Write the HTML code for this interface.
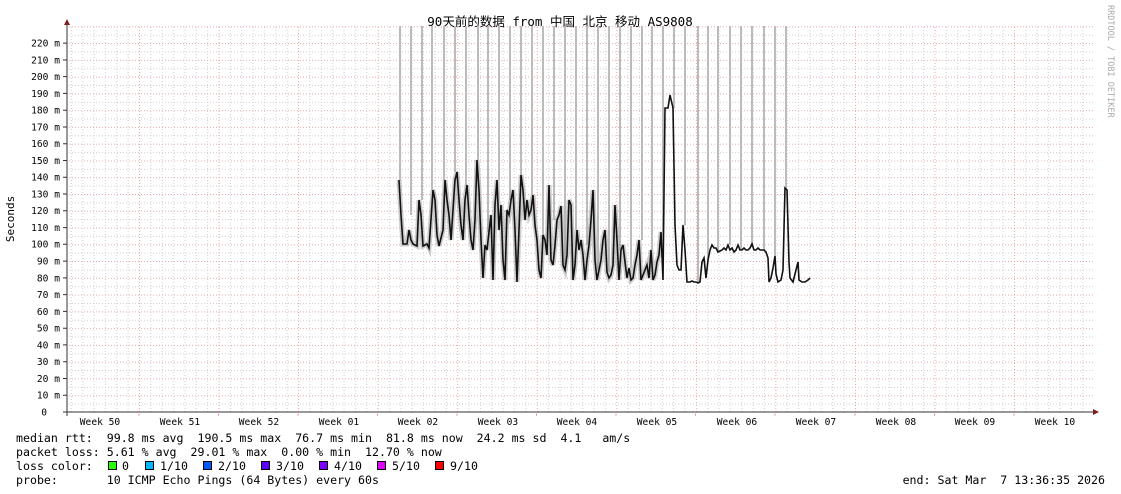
<!DOCTYPE html>
<html><head><meta charset="utf-8"><style>
html,body{margin:0;padding:0;background:#fff;width:1121px;height:494px;overflow:hidden}
svg{display:block}
.m{font-family:"DejaVu Sans Mono","Liberation Mono",monospace}
.p{white-space:pre}
</style></head><body>
<svg width="1121" height="494" viewBox="0 0 1121 494" xmlns="http://www.w3.org/2000/svg">
<defs>
<pattern id="hg" patternUnits="userSpaceOnUse" x="0" y="-7.25" width="3" height="16.77">
<rect x="0" y="0" width="1" height="1" fill="#e8a8a8"/>
<rect x="0" y="8.385" width="1" height="1" fill="#cfcfcf"/>
</pattern>
<pattern id="vg" patternUnits="userSpaceOnUse" x="139" y="0" width="79.55" height="3">
<rect x="0" y="0" width="1" height="1" fill="#e8a8a8"/>
<rect x="11.364" y="0" width="1" height="1" fill="#cfcfcf"/>
<rect x="22.728" y="0" width="1" height="1" fill="#cfcfcf"/>
<rect x="34.092" y="0" width="1" height="1" fill="#cfcfcf"/>
<rect x="45.456" y="0" width="1" height="1" fill="#cfcfcf"/>
<rect x="56.82" y="0" width="1" height="1" fill="#cfcfcf"/>
<rect x="68.184" y="0" width="1" height="1" fill="#cfcfcf"/>
</pattern>
</defs>
<rect x="68" y="26" width="1025" height="386" fill="url(#vg)"/>
<rect x="68" y="26" width="1025" height="386" fill="url(#hg)"/>

<text x="560" y="26" text-anchor="middle" font-family="'DejaVu Sans Mono','Noto Sans CJK SC',monospace" font-size="12.5" fill="#000">90天前的数据 from 中国 北京 移动 AS9808</text>
<text transform="translate(1108,5) rotate(90)" class="m" font-size="8.5" fill="#aaa">RRDTOOL / TOBI OETIKER</text>
<text transform="translate(14,219) rotate(-90)" class="m" font-size="11" fill="#000" text-anchor="middle">Seconds</text>

<g stroke="#bbb" stroke-width="2">
<path d="M400 26V180M411 26V215M422 26V200M432 26V190M444 26V180M455 26V172M466 26V185M478 26V160M488 26V232M499 26V180M510 26V200M521 26V175M532 26V195M543 26V235M554 26V220M565 26V265M576 26V230M587 26V245M598 26V270M609 26V272M620 26V250M631 26V268M642 26V240M652 26V250M663 26V232M674 26V108M685 26V225M698 26V283M708 26V260M718 26V252M730 26V245M741 26V250M752 26V244M764 26V250M775 26V256M786 26V188"/>
</g>

<polyline fill="none" stroke="#999" stroke-opacity="0.5" stroke-width="5" points="399,180 401,215 403,244 407,244 409,230 411,240 413,244 417,246 419,200 421,215 423,246 427,244 429,248 433,190 435,200 437,235 439,246 443,230 445,180 447,200 449,215 451,240 455,180 457,172 459,200 461,225 463,240 465,200 467,185 469,215 471,240 473,250 475,220 477,160 479,190 481,240 483,278 485,245 487,250 489,232 491,215 493,280 495,205 497,180 499,230 501,205 503,260 505,280 507,210 509,215 511,200 513,190 515,230 517,282 519,230 521,175 523,190 525,220 527,200 529,215 531,210 533,195 535,225 537,240 539,270 541,278 543,235 545,240 547,255 549,185 551,260 553,265 555,245 557,220 559,215 561,206 563,265 565,270 567,255 569,200 571,205 573,280 575,265 577,230 579,250 581,240 583,255 585,280 587,260 589,245 591,220 593,190 595,260 597,280 599,270 601,260 603,240 605,230 607,272 609,278 611,275 613,265 615,205 617,240 619,280 621,250 623,245 625,262 627,278 629,268 631,280 633,278 635,265 637,255 639,240 641,280 643,275 645,270 647,265 649,278 651,250 653,280 655,275 657,262 659,255 661,232"/>

<polyline fill="none" stroke="#111" stroke-width="1.6" points="399,180 401,215 403,244 407,244 409,230 411,240 413,244 417,246 419,200 421,215 423,246 427,244 429,248 433,190 435,200 437,235 439,246 443,230 445,180 447,200 449,215 451,240 455,180 457,172 459,200 461,225 463,240 465,200 467,185 469,215 471,240 473,250 475,220 477,160 479,190 481,240 483,278 485,245 487,250 489,232 491,215 493,280 495,205 497,180 499,230 501,205 503,260 505,280 507,210 509,215 511,200 513,190 515,230 517,282 519,230 521,175 523,190 525,220 527,200 529,215 531,210 533,195 535,225 537,240 539,270 541,278 543,235 545,240 547,255 549,185 551,260 553,265 555,245 557,220 559,215 561,206 563,265 565,270 567,255 569,200 571,205 573,280 575,265 577,230 579,250 581,240 583,255 585,280 587,260 589,245 591,220 593,190 595,260 597,280 599,270 601,260 603,240 605,230 607,272 609,278 611,275 613,265 615,205 617,240 619,280 621,250 623,245 625,262 627,278 629,268 631,280 633,278 635,265 637,255 639,240 641,280 643,275 645,270 647,265 649,278 651,250 653,280 655,275 657,262 659,255 661,232 663,280 665,108 668,108 670,95 673,108 675,225 677,265 679,270 681,270 683,225 685,250 687,282 690,282 692,281 694,282 696,282 698,283 700,282 702,262 704,258 706,278 708,260 710,250 712,245 714,248 716,248 718,252 720,251 722,250 724,248 726,250 728,245 730,250 732,248 734,252 736,250 738,245 740,250 742,250 744,248 746,250 748,250 750,248 752,244 754,250 756,250 758,248 760,250 762,250 764,250 766,252 768,258 769,282 771,278 773,268 775,256 776,274 778,282 781,280 783,270 785,188 787,190 789,262 790,278 793,282 796,270 798,262 799,280 802,282 805,282 808,280 810,278"/>

<path d="M67 22V416M63 412H1097" stroke="#333" stroke-width="1"/>
<path d="M64 25L67 19L70 25Z M1093 409L1099 412L1093 415Z" fill="#7f1d1d"/>
<g stroke="#333"><path d="M63 43.1H67M63 60H67M63 76.6H67M63 93.4H67M63 110.2H67M63 127H67M63 143.7H67M63 160.5H67M63 177.3H67M63 194H67M63 210.8H67M63 227.6H67M63 244.3H67M63 261.1H67M63 277.9H67M63 294.6H67M63 311.4H67M63 328.2H67M63 344.9H67M63 361.7H67M63 378.5H67M63 395.2H67"/></g>
<g stroke="#e8a8a8"><path d="M139 412V416M218.5 412V416M298 412V416M377.5 412V416M457 412V416M536.5 412V416M616 412V416M695.5 412V416M775 412V416M855 412V416M934.5 412V416M1014 412V416"/></g>

<g class="m" font-size="9.6" fill="#000" text-anchor="end">
<text x="60" y="46.5">220 m</text><text x="60" y="63.3">210 m</text><text x="60" y="80">200 m</text><text x="60" y="96.8">190 m</text><text x="60" y="113.6">180 m</text><text x="60" y="130.4">170 m</text><text x="60" y="147.1">160 m</text><text x="60" y="163.9">150 m</text><text x="60" y="180.7">140 m</text><text x="60" y="197.4">130 m</text><text x="60" y="214.2">120 m</text><text x="60" y="231">110 m</text><text x="60" y="247.7">100 m</text><text x="60" y="264.5">90 m</text><text x="60" y="281.3">80 m</text><text x="60" y="298">70 m</text><text x="60" y="314.8">60 m</text><text x="60" y="331.6">50 m</text><text x="60" y="348.3">40 m</text><text x="60" y="365.1">30 m</text><text x="60" y="381.9">20 m</text><text x="60" y="398.6">10 m</text><text x="47" y="415.4">0</text>
</g>
<g class="m" font-size="9.6" fill="#000" text-anchor="middle">
<text x="100" y="425">Week 50</text><text x="180" y="425">Week 51</text><text x="259" y="425">Week 52</text><text x="339" y="425">Week 01</text><text x="418" y="425">Week 02</text><text x="498" y="425">Week 03</text><text x="577" y="425">Week 04</text><text x="657" y="425">Week 05</text><text x="737" y="425">Week 06</text><text x="816" y="425">Week 07</text><text x="896" y="425">Week 08</text><text x="975" y="425">Week 09</text><text x="1055" y="425">Week 10</text>
</g>
<g class="m" font-size="11.6" fill="#000">
<text class="p" x="16" y="442">median rtt:  99.8 ms avg  190.5 ms max  76.7 ms min  81.8 ms now  24.2 ms sd  4.1   am/s</text>
<text class="p" x="16" y="456">packet loss: 5.61 % avg  29.01 % max  0.00 % min  12.70 % now</text>
<text class="p" x="16" y="470">loss color:</text>
<text x="122" y="470">0</text><text x="160" y="470">1/10</text><text x="218" y="470">2/10</text><text x="276" y="470">3/10</text><text x="334" y="470">4/10</text><text x="392" y="470">5/10</text><text x="450" y="470">9/10</text>
<text class="p" x="16" y="484">probe:       10 ICMP Echo Pings (64 Bytes) every 60s</text>
<text class="p" x="1105" y="484" text-anchor="end">end: Sat Mar  7 13:36:35 2026</text>
</g>
<g stroke="#000" stroke-width="1">
<rect x="108.5" y="461.5" width="8" height="8" fill="#26ff00"/>
<rect x="145.5" y="461.5" width="8" height="8" fill="#00b8ff"/>
<rect x="203.5" y="461.5" width="8" height="8" fill="#0059ff"/>
<rect x="261.5" y="461.5" width="8" height="8" fill="#5e00ff"/>
<rect x="319.5" y="461.5" width="8" height="8" fill="#7e00ff"/>
<rect x="377.5" y="461.5" width="8" height="8" fill="#dd00ff"/>
<rect x="435.5" y="461.5" width="8" height="8" fill="#ff0000"/>
</g>
</svg>
</body></html>
